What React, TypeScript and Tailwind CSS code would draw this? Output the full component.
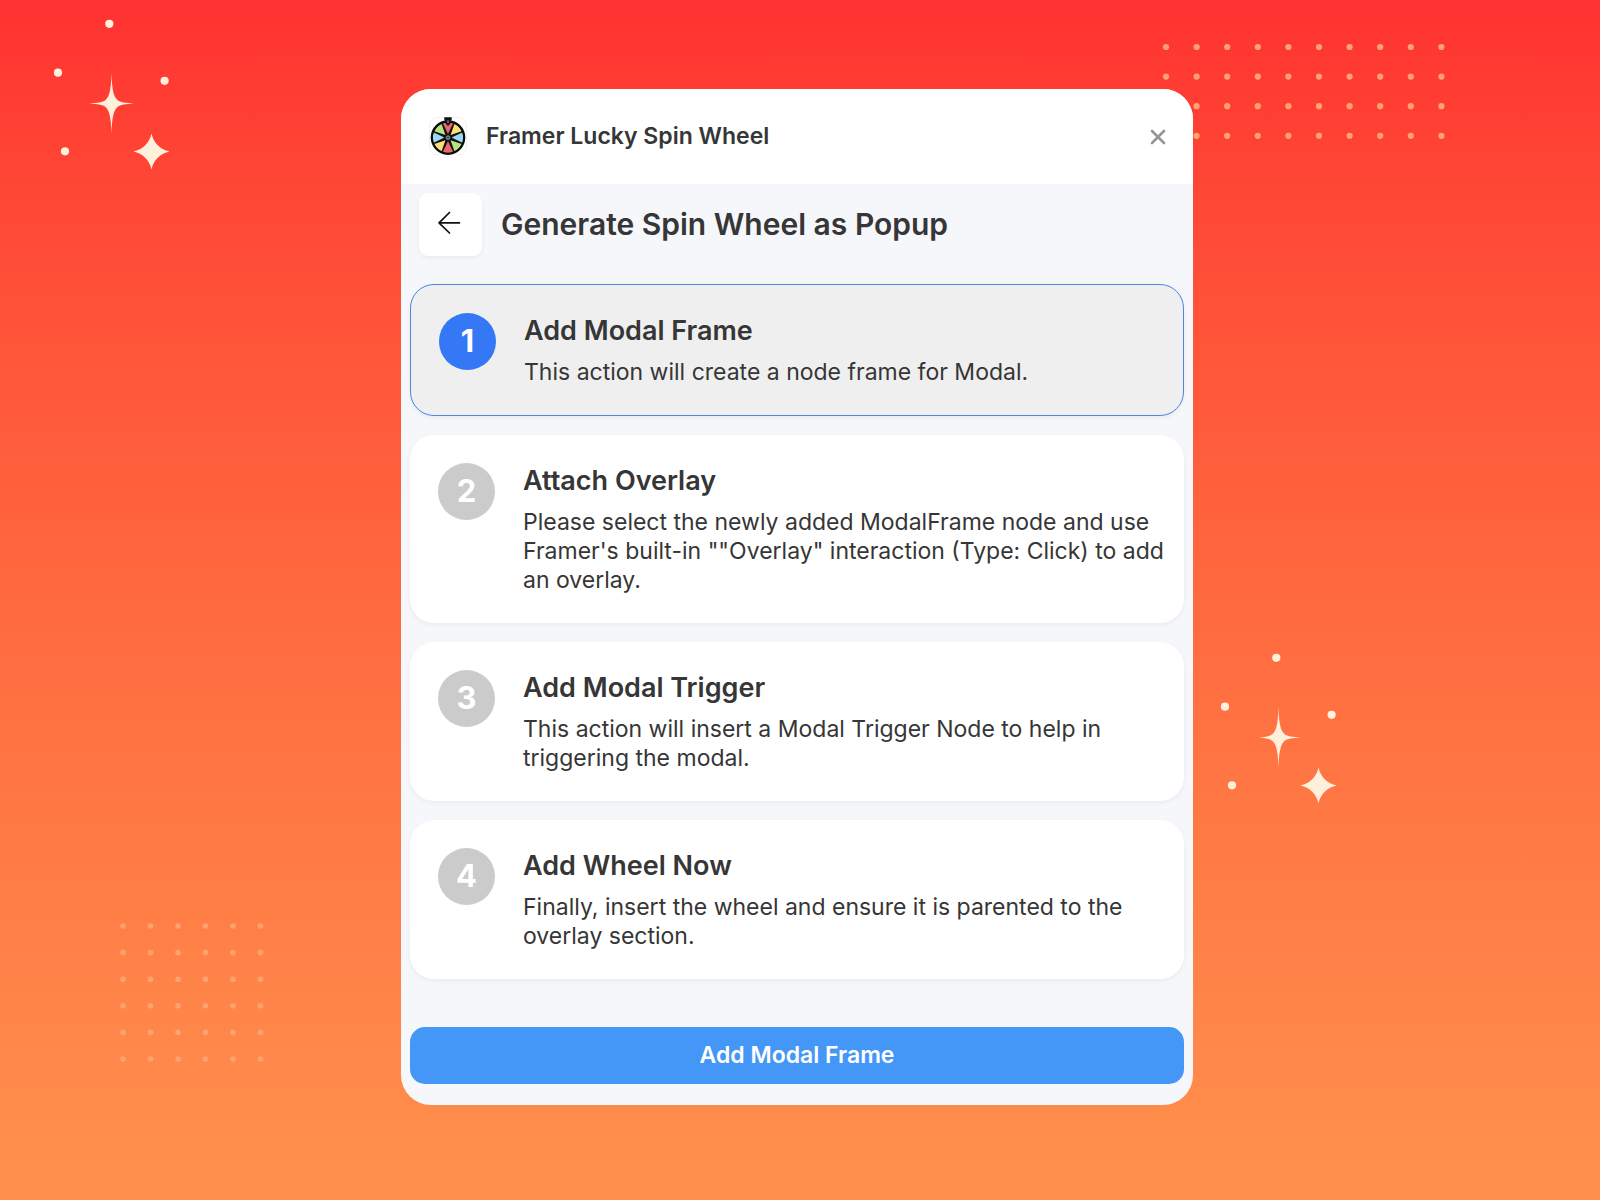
import { clsx } from 'clsx';

interface Step {
  title: string;
  description: string;
}

const STEPS: Step[] = [
  {
    title: 'Add Modal Frame',
    description: 'This action will create a node frame for Modal.',
  },
  {
    title: 'Attach Overlay',
    description:
      'Please select the newly added ModalFrame node and use Framer\'s built-in ""Overlay" interaction (Type: Click) to add an overlay.',
  },
  {
    title: 'Add Modal Trigger',
    description: 'This action will insert a Modal Trigger Node to help in triggering the modal.',
  },
  {
    title: 'Add Wheel Now',
    description: 'Finally, insert the wheel and ensure it is parented to the overlay section.',
  },
];

const SEGMENT_COLORS = [
  '#e8666c',
  '#fbe07a',
  '#9ad8f8',
  '#b5e283',
  '#e8666c',
  '#fbe07a',
  '#9ad8f8',
  '#b5e283',
];

function Sparkles({ className }: { className: string }) {
  return (
    <svg
      aria-hidden="true"
      viewBox="0 0 120 155"
      width={120}
      height={155}
      fill="#fff0dc"
      className={clsx('absolute', className)}
    >
      <circle cx="59.3" cy="8.8" r="4.1" />
      <circle cx="8" cy="57.7" r="4.1" />
      <circle cx="114.6" cy="65.8" r="4.1" />
      <circle cx="15" cy="136.3" r="4.1" />
      <path d="M61.5 58C62 76 64 82 67.5 85C70.5 87.6 75 88 84 88.5C75 89 70.5 89.4 67.5 92C64 95 62 101 61.5 119C61 101 59 95 55.5 92C52.5 89.4 48 89 39 88.5C48 88 52.5 87.6 55.5 85C59 82 61 76 61.5 58Z" />
      <path d="M101.5 118.5C103.2 127.5 110.5 134.8 119.5 136.5C110.5 138.2 103.2 145.5 101.5 154.5C99.8 145.5 92.5 138.2 83.5 136.5C92.5 134.8 99.8 127.5 101.5 118.5Z" />
    </svg>
  );
}

interface DotGridProps {
  cols: number;
  rows: number;
  gapX: number;
  gapY: number;
  radius: number;
  className: string;
}

function DotGrid({ cols, rows, gapX, gapY, radius, className }: DotGridProps) {
  const dots = Array.from({ length: cols * rows }, (_, i) => ({
    x: 4 + (i % cols) * gapX,
    y: 4 + Math.floor(i / cols) * gapY,
  }));

  return (
    <svg
      aria-hidden="true"
      width={(cols - 1) * gapX + 8}
      height={(rows - 1) * gapY + 8}
      fill="#ffa36e"
      className={clsx('absolute', className)}
    >
      {dots.map((dot) => (
        <circle key={`${dot.x}-${dot.y}`} cx={dot.x} cy={dot.y} r={radius} />
      ))}
    </svg>
  );
}

function WheelLogo() {
  return (
    <svg aria-hidden="true" viewBox="0 0 40 40" width={40} height={40} className="shrink-0">
      <rect x="1.5" y="0.8" width="37" height="37" rx="8" fill="#fff" stroke="#f6eeee" />
      <g transform="translate(20 20.6)">
        <circle r="16" fill="#111" />
        {SEGMENT_COLORS.map((color, i) => (
          <path
            key={i}
            d="M0 -3.6L-5.1 -14.2Q0 -16.6 5.1 -14.2Z"
            fill={color}
            transform={`rotate(${i * 45})`}
          />
        ))}
        <circle r="16.2" fill="none" stroke="#0c0c0c" strokeWidth="2.2" />
        <circle r="3" fill="#6f8294" stroke="#111" strokeWidth="1.3" />
        <circle r="0.9" fill="#24303a" />
      </g>
      <path d="M16.3 0.3H23.7V3.2H22.8V6L20 9L17.2 6V3.2H16.3Z" fill="#111" />
      <path d="M19 3.2H21V5.4L20 6.6L19 5.4Z" fill="#5f6468" />
    </svg>
  );
}

function StepCard({ step, index, active }: { step: Step; index: number; active: boolean }) {
  return (
    <li
      aria-current={active ? 'step' : undefined}
      className={clsx(
        'flex items-start gap-7 rounded-3xl py-7 pr-5 pl-7 shadow-[0_2px_5px_rgba(0,0,0,0.05)]',
        active ? 'border border-[#4f84e8] bg-[#efefef]' : 'bg-white'
      )}
    >
      <span
        className={clsx(
          'flex size-[57px] shrink-0 items-center justify-center rounded-full text-[31px] font-bold text-white',
          active ? 'bg-[#3478f6]' : 'bg-[#cbcbcb]'
        )}
      >
        {index + 1}
      </span>
      <div className="flex flex-col gap-[9px]">
        <h2 className="text-[27px] leading-9 font-semibold">{step.title}</h2>
        <p className="text-[23px] leading-[29px]">{step.description}</p>
      </div>
    </li>
  );
}

export default function App() {
  const activeStep = 0;

  return (
    <div className="relative min-h-screen overflow-hidden bg-linear-to-b from-[#ff3131] to-[#ff914d] pt-[89px] pr-1.5 pb-[95px] font-['Inter',sans-serif] text-[#363636]">
      <Sparkles className="top-[15px] left-[50px]" />
      <Sparkles className="top-[649px] left-[1217px]" />
      <DotGrid
        cols={10}
        rows={4}
        gapX={30.6}
        gapY={29.6}
        radius={3.1}
        className="top-[43px] left-[1162px]"
      />
      <DotGrid
        cols={6}
        rows={6}
        gapX={27.5}
        gapY={26.6}
        radius={2.8}
        className="top-[922px] left-[119px]"
      />

      <main className="relative mx-auto w-full max-w-[792px] overflow-hidden rounded-[30px] bg-[#f5f7fb]">
        <header className="flex h-[95px] items-center gap-[18px] bg-white px-[27px]">
          <WheelLogo />
          <span className="text-[23px] font-semibold">Framer Lucky Spin Wheel</span>
          <button type="button" aria-label="Close" className="ml-auto">
            <svg
              viewBox="0 0 16 16"
              width={16}
              height={16}
              fill="none"
              stroke="#959595"
              strokeWidth="2.6"
              strokeLinecap="round"
            >
              <path d="M2 2L14 14M14 2L2 14" />
            </svg>
          </button>
        </header>

        <div className="px-[9px] pt-[9px] pb-[21px]">
          <div className="flex items-center gap-[19px] px-[9px]">
            <button
              type="button"
              aria-label="Back"
              className="flex size-[63px] items-center justify-center rounded-[9px] bg-white pr-1 pb-1 shadow-[0_2px_5px_rgba(0,0,0,0.05)]"
            >
              <svg
                viewBox="0 0 24 24"
                width={24}
                height={24}
                fill="none"
                stroke="#111"
                strokeWidth="1.7"
                strokeLinecap="round"
                strokeLinejoin="round"
              >
                <path d="M12.5 1.5L2 11.8L12.5 22M2 11.8H22.5" />
              </svg>
            </button>
            <h1 className="text-[30px] font-semibold">Generate Spin Wheel as Popup</h1>
          </div>

          <ol className="mt-7 flex flex-col gap-[19px]">
            {STEPS.map((step, index) => (
              <StepCard key={step.title} step={step} index={index} active={index === activeStep} />
            ))}
          </ol>

          <button
            type="button"
            className="mt-12 h-[57px] w-full rounded-[15px] bg-[#4497f7] text-[23px] font-semibold text-white"
          >
            Add Modal Frame
          </button>
        </div>
      </main>
    </div>
  );
}
